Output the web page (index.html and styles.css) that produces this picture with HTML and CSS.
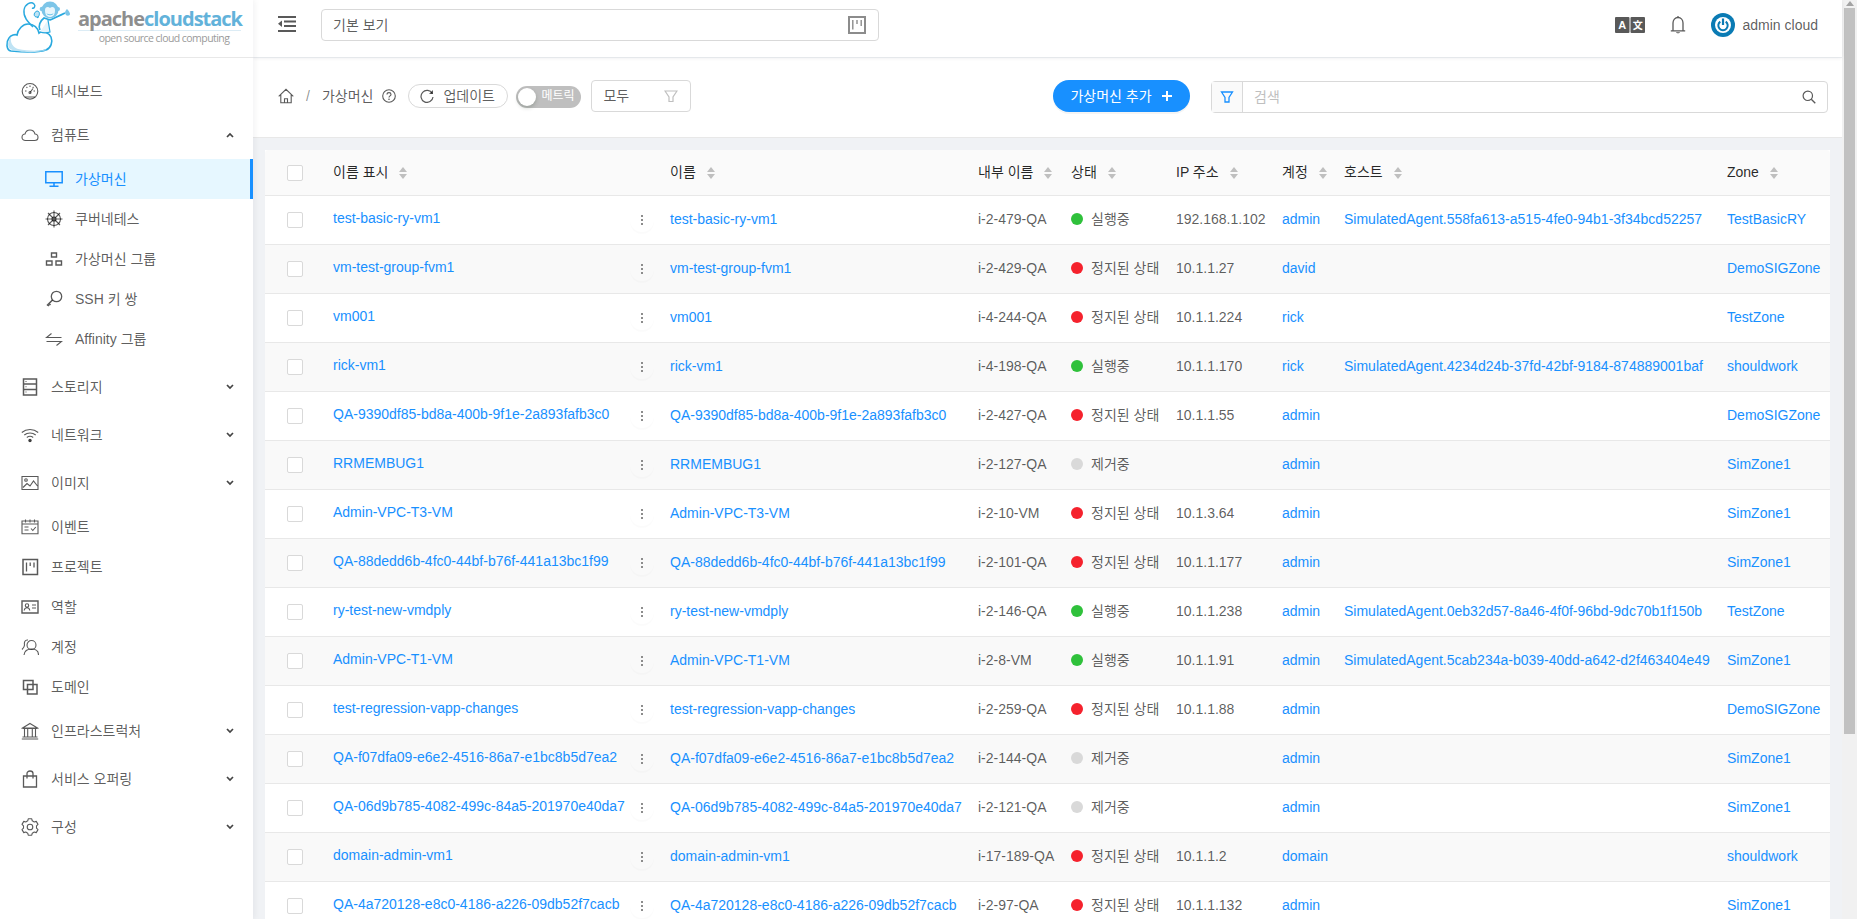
FILE: index.html
```html
<!DOCTYPE html>
<html lang="ko">
<head>
<meta charset="utf-8">
<title>가상머신 - Apache CloudStack</title>
<link rel="stylesheet" href="styles.css">
</head>
<body>
<svg class="defs" width="0" height="0" aria-hidden="true">
  <defs>
    <symbol id="sort" viewBox="0 0 8 12"><path d="M4 0l4 5H0z"/><path d="M4 12L0 7h8z"/></symbol>
    <symbol id="down" viewBox="0 0 8 6"><path d="M1 1l3 3 3-3" fill="none" stroke="currentColor" stroke-width="1.7"/></symbol>
    <symbol id="up" viewBox="0 0 8 6"><path d="M1 5l3-3 3 3" fill="none" stroke="currentColor" stroke-width="1.7"/></symbol>
    <symbol id="board" viewBox="0 0 18 18"><path d="M1 1h16v16H1z" fill="none" stroke="currentColor" stroke-width="2"/><path d="M4.800 4v9.500M9 4v4M13.200 4v6" fill="none" stroke="currentColor" stroke-width="1.400"/></symbol>
  </defs>
</svg>
<div class="app">
  <aside class="sidebar">
    <div class="logo">
      <svg class="logo-mark" viewBox="0 0 72 57">
        <path d="M11 51c-5-1-5-9-2-13 2-3 6-4 8-3 1-6 6-11 11-11 6 0 10 4 11 9 4-3 10 0 12 4 2 5 0 11-5 13-9 3-25 2-35 1z" fill="#fff" stroke="#29a9df" stroke-width="1.6"/>
        <path d="M10 49c-3-3-2-9 1-12-1 6 2 10 7 12 9 2 20 2 29 1-9 3-28 3-37-1z" fill="#bfe3f4"/>
        <path d="M33 27c-5-5-10-10-9-17 1-6 7-9 10-6 2 2 0 5-2 4" fill="none" stroke="#29a9df" stroke-width="1.4"/>
        <path d="M38 18c-1-3-1-5-1-5M40 30c-2-4 0-9 4-12l6 2c4-2 9-4 15-7" fill="none" stroke="#29a9df" stroke-width="1.6"/>
        <path d="M40 32c3 1 7 1 10 0l-2-12" fill="#e6f4fb" stroke="#29a9df" stroke-width="1.2"/>
        <circle cx="50" cy="10" r="8.500" fill="#7cc5e8"/>
        <circle cx="42" cy="9" r="2.300" fill="#7cc5e8"/>
        <circle cx="58" cy="9" r="2" fill="#7cc5e8"/>
        <path d="M45 10c0-3 3-4 5-2 2-2 5-1 5 2 0 5-2 7-5 7s-5-2-5-7z" fill="#e9f6fc"/>
        <path d="M46.500 13c2 2 5 2 7 0-1 3-6 3-7 0z" fill="#29a9df"/>
        <path d="M36 17c-3-1-2-5 1-6 3 0 3 4 1 6z" fill="#bfe3f4" stroke="#29a9df"/>
        <path d="M65 13c0-2 1-3 2-4 0 0 3 3 3 5s-4 3-5-1z" fill="#7cc5e8"/>
      </svg>
      <div class="logo-text">
        <div class="logo-name"><span class="logo-apache">apache</span><span class="logo-cloud">cloudstack</span></div>
        <div class="logo-tag">open source cloud computing</div>
      </div>
    </div>
    <nav class="menu">
      <a class="item gap-s">
        <svg class="ico" viewBox="0 0 18 18"><circle cx="9" cy="9.300" r="7.800"/><path d="M4 15h10M9 10.500l3-4M4 9h1.500M9 3.500v1.500M12.500 5l-.8.800M5.500 5l.8.800M14 9h-1.500"/><circle cx="9" cy="10.500" r="1"/></svg>
        <span>대시보드</span></a>
      <a class="item gap-s">
        <svg class="ico" viewBox="0 0 18 18"><path d="M4.500 14.500C2.500 14.500 1 13 1 11.200s1.500-3.200 3-3.200c.7-2.600 2.500-4 5-4s4.300 1.400 5 4c1.500 0 3 1.400 3 3.200s-1.500 3.300-3.500 3.300z"/></svg>
        <span>컴퓨트</span><svg class="chev"><use href="#up"/></svg></a>
      <a class="item nested active">
        <svg class="ico" viewBox="0 0 18 18"><path d="M.8 1.800h16.400v11H.8zM9 12.800v3.200M4.500 16.200h9" stroke-width="1.500"/></svg>
        <span>가상머신</span></a>
      <a class="item nested">
        <svg class="ico" viewBox="0 0 18 18"><circle cx="9" cy="9" r="6.500"/><circle cx="9" cy="9" r="2"/><path d="M9 .5v17M.5 9h17M3 3l12 12M15 3L3 15"/></svg>
        <span>쿠버네테스</span></a>
      <a class="item nested">
        <svg class="ico" viewBox="0 0 18 18"><path d="M6.500 3h5v4h-5zM1.500 11h5.500v4H1.500zM11 11h5.500v4H11z" stroke-width="1.400"/></svg>
        <span>가상머신 그룹</span></a>
      <a class="item nested">
        <svg class="ico" viewBox="0 0 18 18"><circle cx="11.500" cy="6.500" r="5.200" stroke-width="1.300"/><path d="M7.500 10L2 15.500M4 13.500l1.500 1.500M2.500 14.500L4 16" stroke-width="1.600"/></svg>
        <span>SSH 키 쌍</span></a>
      <a class="item nested gap-l">
        <svg class="ico" viewBox="0 0 18 18"><path d="M6.500 3.500l-5 4h15M11.500 15.500l5-4h-15"/></svg>
        <span>Affinity 그룹</span></a>
      <a class="item gap-l">
        <svg class="ico" viewBox="0 0 18 18"><path d="M2.500 1h13v16h-13zM2.500 6h13M2.500 11.500h13" stroke-width="1.500"/><path d="M4.500 3.500h1M4.500 8.700h1M4.500 14h1"/></svg>
        <span>스토리지</span><svg class="chev"><use href="#down"/></svg></a>
      <a class="item gap-l">
        <svg class="ico" viewBox="0 0 18 18"><path d="M.8 6.500c4.700-4 11.700-4 16.400 0M3.300 9c3.300-2.700 8.100-2.700 11.400 0M5.800 11.500c2-1.500 4.400-1.500 6.400 0"/><circle cx="9" cy="14.500" r="1.200" fill="currentColor"/></svg>
        <span>네트워크</span><svg class="chev"><use href="#down"/></svg></a>
      <a class="item gap-s">
        <svg class="ico" viewBox="0 0 18 18"><path d="M1 2.500h16v13H1zM2 13.500l4-4 3 2.500 3.500-5 4 5"/><circle cx="5" cy="6" r="1.300"/></svg>
        <span>이미지</span><svg class="chev"><use href="#down"/></svg></a>
      <a class="item">
        <svg class="ico" viewBox="0 0 18 18"><path d="M1 3h16v12.800H1zM4.500 1.500v3M9 1.500v3M13.500 1.500v3M1 6h16M3.500 9h4M3.500 12h4M10 10.500l1.800 2 3-3.500"/></svg>
        <span>이벤트</span></a>
      <a class="item">
        <svg class="ico" viewBox="0 0 18 18"><path d="M2 1.500h14.500v15H2z" stroke-width="1.500"/><path d="M5.500 4.500v9M9.200 4.500v3.500M13 4.500v5" stroke-width="1.300"/></svg>
        <span>프로젝트</span></a>
      <a class="item">
        <svg class="ico" viewBox="0 0 18 18"><path d="M1 3h16v12H1z" stroke-width="1.400"/><circle cx="6" cy="7.500" r="1.700"/><path d="M3.200 12.500c.3-2 1.500-2.800 2.800-2.800s2.500.8 2.800 2.800M11 7h4M11 10h4"/></svg>
        <span>역할</span></a>
      <a class="item">
        <svg class="ico" viewBox="0 0 18 18"><circle cx="10.500" cy="7" r="4.500"/><path d="M3 17c.5-4 3.500-6 7.500-6s7 2 7 6M7 2C4 1.500 3 4 3.500 7c0 1-1.500 3.500-2.500 4.500"/></svg>
        <span>계정</span></a>
      <a class="item gap-s">
        <svg class="ico" viewBox="0 0 18 18"><path d="M2.500 2.500h9.500v9H2.500zM6.500 6.500H16V16H6.500z" stroke-width="1.500"/></svg>
        <span>도메인</span></a>
      <a class="item gap-l">
        <svg class="ico" viewBox="0 0 18 18"><path d="M9 1.500l7.500 4.500h-15zM1.500 6.500h15M3.500 7v7.500M6.700 7v7.500M11.300 7v7.500M14.500 7v7.500M1.500 15h15M.8 17h16.400"/></svg>
        <span>인프라스트럭처</span><svg class="chev"><use href="#down"/></svg></a>
      <a class="item gap-l">
        <svg class="ico" viewBox="0 0 18 18"><path d="M2.500 6h13v11h-13zM6 8.500V3.500C6 2 7.300 1 9 1s3 1 3 2.500v5" stroke-width="1.300"/></svg>
        <span>서비스 오퍼링</span><svg class="chev"><use href="#down"/></svg></a>
      <a class="item">
        <svg class="ico" viewBox="0 0 18 18"><circle cx="9" cy="9" r="2.800"/><path stroke-linejoin="round" d="M6.740 2.800L7.250.78h3.500l.51 2.020 1.980 1.140 2-.56 1.750 3.020-1.490 1.450v2.300l1.490 1.450-1.750 3.020-2-.56-1.980 1.140-.51 2.020h-3.500l-.51-2.020-1.980-1.140-2 .56-1.750-3.020 1.490-1.450v-2.300L1.010 6.400l1.750-3.020 2 .56z"/></svg>
        <span>구성</span><svg class="chev"><use href="#down"/></svg></a>
    </nav>
  </aside>

  <div class="main">
    <header class="topbar">
      <svg class="collapse" viewBox="0 0 18 16"><path d="M0 1h18M6 5.500h12M6 10h12M0 15h18" fill="none" stroke="currentColor" stroke-width="1.800"/><path d="M0 7.700L4 4.500v6.500z" fill="currentColor"/></svg>
      <div class="project-select"><span>기본 보기</span><svg class="board"><use href="#board"/></svg></div>
      <div class="top-right">
        <svg class="translate" viewBox="0 0 30 16">
          <rect x="0" y="0" width="14.500" height="16" rx="1" fill="#595959"/>
          <rect x="15.500" y="0" width="14.500" height="16" rx="1" fill="#595959"/>
          <text x="7.200" y="12.300" class="translate-a">A</text>
          <text x="22.700" y="12" class="translate-z">文</text>
        </svg>
        <svg class="bell" viewBox="0 0 16 19"><path d="M3 14.500V7c0-3 2-5.500 5-5.500s5 2.500 5 5.500v7.500M.8 14.800h14.400" fill="none" stroke="currentColor" stroke-width="1.300"/><path d="M6 16.200c.3 1.500 3.700 1.500 4 0z" fill="currentColor"/><path d="M8 0v1.500" stroke="currentColor" stroke-width="1.200"/></svg>
        <div class="user">
          <svg class="avatar" viewBox="0 0 24 24"><circle cx="12" cy="12" r="12" fill="#0a7bb4"/><circle cx="12" cy="12" r="8" fill="#fff"/><path d="M9.300 8.600a4.700 4.700 0 1 0 5.400 0" fill="none" stroke="#0a7bb4" stroke-width="2"/><path d="M12 5.500v6.500" stroke="#0a7bb4" stroke-width="2.200"/></svg>
          <span>admin cloud</span>
        </div>
      </div>
    </header>

    <section class="toolbar">
      <svg class="home" viewBox="0 0 16 16"><path d="M.7 8.300L8 1.300l7.300 7M2.800 6.800v8h10.400v-8M6.500 14.800v-4h3v4" fill="none" stroke="currentColor" stroke-width="1.100"/></svg>
      <span class="crumb-sep">/</span>
      <span class="crumb">가상머신</span>
      <svg class="help" viewBox="0 0 14 14"><circle cx="7" cy="7" r="6.300" fill="none" stroke="currentColor" stroke-width="1.100"/><path d="M5 5.500c0-1.200 1-1.900 2-1.900s2 .7 2 1.800c0 1.400-2 1.500-2 3" fill="none" stroke="currentColor" stroke-width="1.100"/><circle cx="7" cy="10.200" r=".8" fill="currentColor"/></svg>
      <button class="refresh"><svg viewBox="0 0 14 14"><path d="M12.300 4.500A6 6 0 1 0 13 8" fill="none" stroke="currentColor" stroke-width="1.200"/><path d="M13 1v4H9z" fill="currentColor"/></svg><span>업데이트</span></button>
      <div class="toggle"><span class="knob"></span><span class="toggle-label">메트릭</span></div>
      <div class="filter-select"><span>모두</span><svg viewBox="0 0 14 14"><path d="M1 2h12L9 8v4.500H5V8z" fill="none" stroke="#bfbfbf" stroke-width="1.200"/></svg></div>
      <button class="add"><span>가상머신 추가</span><svg viewBox="0 0 12 12"><path d="M6 1v10M1 6h10" stroke="#fff" stroke-width="2"/></svg></button>
      <div class="search">
        <span class="search-filter"><svg viewBox="0 0 14 14"><path d="M1.500 2h11L9 7.500v4.500H5V7.500z" fill="none" stroke="#1890ff" stroke-width="1.300"/></svg></span>
        <span class="search-ph">검색</span>
        <svg class="search-ico" viewBox="0 0 14 14"><circle cx="5.800" cy="5.800" r="4.700" fill="none" stroke="currentColor" stroke-width="1.200"/><path d="M9.300 9.300l4 4" stroke="currentColor" stroke-width="1.300"/></svg>
      </div>
    </section>

    <main class="content">
      <table class="vm-table">
        <colgroup>
          <col class="c-check"><col class="c-display"><col class="c-name"><col class="c-internal"><col class="c-state"><col class="c-ip"><col class="c-account"><col class="c-host"><col class="c-zone">
        </colgroup>
        <thead>
          <tr>
            <th><span class="check"></span></th>
            <th>이름 표시<svg class="sort"><use href="#sort"/></svg></th>
            <th>이름<svg class="sort"><use href="#sort"/></svg></th>
            <th>내부 이름<svg class="sort"><use href="#sort"/></svg></th>
            <th>상태<svg class="sort"><use href="#sort"/></svg></th>
            <th>IP 주소<svg class="sort"><use href="#sort"/></svg></th>
            <th>계정<svg class="sort"><use href="#sort"/></svg></th>
            <th>호스트<svg class="sort"><use href="#sort"/></svg></th>
            <th>Zone<svg class="sort"><use href="#sort"/></svg></th>
          </tr>
        </thead>
        <tbody>
          <tr><td><span class="check"></span></td><td><div class="dn"><a>test-basic-ry-vm1</a><span class="more"></span></div></td><td><a>test-basic-ry-vm1</a></td><td>i-2-479-QA</td><td><span class="dot run"></span>실행중</td><td>192.168.1.102</td><td><a>admin</a></td><td><a>SimulatedAgent.558fa613-a515-4fe0-94b1-3f34bcd52257</a></td><td><a>TestBasicRY</a></td></tr>
          <tr><td><span class="check"></span></td><td><div class="dn"><a>vm-test-group-fvm1</a><span class="more"></span></div></td><td><a>vm-test-group-fvm1</a></td><td>i-2-429-QA</td><td><span class="dot stop"></span>정지된 상태</td><td>10.1.1.27</td><td><a>david</a></td><td></td><td><a>DemoSIGZone</a></td></tr>
          <tr><td><span class="check"></span></td><td><div class="dn"><a>vm001</a><span class="more"></span></div></td><td><a>vm001</a></td><td>i-4-244-QA</td><td><span class="dot stop"></span>정지된 상태</td><td>10.1.1.224</td><td><a>rick</a></td><td></td><td><a>TestZone</a></td></tr>
          <tr><td><span class="check"></span></td><td><div class="dn"><a>rick-vm1</a><span class="more"></span></div></td><td><a>rick-vm1</a></td><td>i-4-198-QA</td><td><span class="dot run"></span>실행중</td><td>10.1.1.170</td><td><a>rick</a></td><td><a>SimulatedAgent.4234d24b-37fd-42bf-9184-874889001baf</a></td><td><a>shouldwork</a></td></tr>
          <tr><td><span class="check"></span></td><td><div class="dn"><a>QA-9390df85-bd8a-400b-9f1e-2a893fafb3c0</a><span class="more"></span></div></td><td><a>QA-9390df85-bd8a-400b-9f1e-2a893fafb3c0</a></td><td>i-2-427-QA</td><td><span class="dot stop"></span>정지된 상태</td><td>10.1.1.55</td><td><a>admin</a></td><td></td><td><a>DemoSIGZone</a></td></tr>
          <tr><td><span class="check"></span></td><td><div class="dn"><a>RRMEMBUG1</a><span class="more"></span></div></td><td><a>RRMEMBUG1</a></td><td>i-2-127-QA</td><td><span class="dot gone"></span>제거중</td><td></td><td><a>admin</a></td><td></td><td><a>SimZone1</a></td></tr>
          <tr><td><span class="check"></span></td><td><div class="dn"><a>Admin-VPC-T3-VM</a><span class="more"></span></div></td><td><a>Admin-VPC-T3-VM</a></td><td>i-2-10-VM</td><td><span class="dot stop"></span>정지된 상태</td><td>10.1.3.64</td><td><a>admin</a></td><td></td><td><a>SimZone1</a></td></tr>
          <tr><td><span class="check"></span></td><td><div class="dn"><a>QA-88dedd6b-4fc0-44bf-b76f-441a13bc1f99</a><span class="more"></span></div></td><td><a>QA-88dedd6b-4fc0-44bf-b76f-441a13bc1f99</a></td><td>i-2-101-QA</td><td><span class="dot stop"></span>정지된 상태</td><td>10.1.1.177</td><td><a>admin</a></td><td></td><td><a>SimZone1</a></td></tr>
          <tr><td><span class="check"></span></td><td><div class="dn"><a>ry-test-new-vmdply</a><span class="more"></span></div></td><td><a>ry-test-new-vmdply</a></td><td>i-2-146-QA</td><td><span class="dot run"></span>실행중</td><td>10.1.1.238</td><td><a>admin</a></td><td><a>SimulatedAgent.0eb32d57-8a46-4f0f-96bd-9dc70b1f150b</a></td><td><a>TestZone</a></td></tr>
          <tr><td><span class="check"></span></td><td><div class="dn"><a>Admin-VPC-T1-VM</a><span class="more"></span></div></td><td><a>Admin-VPC-T1-VM</a></td><td>i-2-8-VM</td><td><span class="dot run"></span>실행중</td><td>10.1.1.91</td><td><a>admin</a></td><td><a>SimulatedAgent.5cab234a-b039-40dd-a642-d2f463404e49</a></td><td><a>SimZone1</a></td></tr>
          <tr><td><span class="check"></span></td><td><div class="dn"><a>test-regression-vapp-changes</a><span class="more"></span></div></td><td><a>test-regression-vapp-changes</a></td><td>i-2-259-QA</td><td><span class="dot stop"></span>정지된 상태</td><td>10.1.1.88</td><td><a>admin</a></td><td></td><td><a>DemoSIGZone</a></td></tr>
          <tr><td><span class="check"></span></td><td><div class="dn"><a>QA-f07dfa09-e6e2-4516-86a7-e1bc8b5d7ea2</a><span class="more"></span></div></td><td><a>QA-f07dfa09-e6e2-4516-86a7-e1bc8b5d7ea2</a></td><td>i-2-144-QA</td><td><span class="dot gone"></span>제거중</td><td></td><td><a>admin</a></td><td></td><td><a>SimZone1</a></td></tr>
          <tr><td><span class="check"></span></td><td><div class="dn"><a>QA-06d9b785-4082-499c-84a5-201970e40da7</a><span class="more"></span></div></td><td><a>QA-06d9b785-4082-499c-84a5-201970e40da7</a></td><td>i-2-121-QA</td><td><span class="dot gone"></span>제거중</td><td></td><td><a>admin</a></td><td></td><td><a>SimZone1</a></td></tr>
          <tr><td><span class="check"></span></td><td><div class="dn"><a>domain-admin-vm1</a><span class="more"></span></div></td><td><a>domain-admin-vm1</a></td><td>i-17-189-QA</td><td><span class="dot stop"></span>정지된 상태</td><td>10.1.1.2</td><td><a>domain</a></td><td></td><td><a>shouldwork</a></td></tr>
          <tr><td><span class="check"></span></td><td><div class="dn"><a>QA-4a720128-e8c0-4186-a226-09db52f7cacb</a><span class="more"></span></div></td><td><a>QA-4a720128-e8c0-4186-a226-09db52f7cacb</a></td><td>i-2-97-QA</td><td><span class="dot stop"></span>정지된 상태</td><td>10.1.1.132</td><td><a>admin</a></td><td></td><td><a>SimZone1</a></td></tr>
        </tbody>
      </table>
    </main>
  </div>

  <div class="scrollbar"><span class="arrow"></span><span class="thumb"></span></div>
</div>
</body>
</html>
```

FILE: styles.css
```css
* { box-sizing: border-box; }
html, body { margin: 0; height: 100%; overflow: hidden; }
body {
  font-family: "Liberation Sans", "Noto Sans CJK KR", sans-serif;
  font-size: 14px;
  line-height: 1.5;
  color: rgba(0, 0, 0, .65);
  background: #f0f2f5;
}
a { color: #1890ff; text-decoration: none; }
button { font: inherit; color: inherit; cursor: pointer; }
.defs { position: absolute; }

.app { display: flex; height: 100vh; overflow: hidden; }

/* sidebar */
.sidebar {
  flex: none;
  width: 253px;
  background: #fff;
  box-shadow: 2px 0 6px rgba(0, 21, 41, .05);
  position: relative;
  z-index: 2;
}
.logo {
  height: 58px;
  display: flex;
  border-bottom: 1px solid #e8e8e8;
  overflow: hidden;
}
.logo-mark { flex: none; width: 72px; height: 57px; }
.logo-text { margin-left: 6px; padding-top: 8px; width: 163px; }
.logo-name {
  font-family: "Open Sans", sans-serif;
  font-weight: 700;
  font-size: 20px;
  line-height: 22px;
  letter-spacing: -1px;
  white-space: nowrap;
  border-bottom: 1px solid #dcecf5;
  height: 23px;
}
.logo-apache { color: #8e8e8e; }
.logo-cloud { color: #62b2da; }
.logo-tag {
  font-family: "Open Sans", sans-serif;
  font-size: 10.5px;
  line-height: 14px;
  letter-spacing: -.55px;
  padding-left: 9px;
  color: #9a9a9a;
  text-align: center;
  white-space: nowrap;
}

.menu { display: flex; flex-direction: column; padding-top: 13px; }
.item {
  position: relative;
  display: flex;
  align-items: center;
  flex: none;
  height: 40px;
  padding-left: 21px;
  color: rgba(0, 0, 0, .65);
}
.item.gap-s { margin-bottom: 4px; }
.item.gap-l { margin-bottom: 8px; }
.item.nested { padding-left: 45px; }
.item.active { background: #e6f7ff; color: #1890ff; border-right: 3px solid #1890ff; }
.ico {
  flex: none;
  width: 18px;
  height: 18px;
  margin-right: 12px;
  fill: none;
  stroke: currentColor;
  stroke-width: 1.1;
}
.chev { position: absolute; left: 226px; top: 17px; width: 8px; height: 6px; color: #444; }

/* main column */
.main { flex: 1; min-width: 0; display: flex; flex-direction: column; }
.topbar {
  flex: none;
  height: 57px;
  background: #fff;
  box-shadow: 0 1px 4px rgba(0, 21, 41, .08);
  display: flex;
  align-items: center;
  padding-left: 25px;
  position: relative;
  z-index: 1;
}
.collapse { width: 18px; height: 16px; color: #595959; margin-right: 25px; margin-top: -9px; }
.project-select {
  width: 558px;
  height: 32px;
  margin-top: -7px;
  border: 1px solid #d9d9d9;
  border-radius: 4px;
  display: flex;
  align-items: center;
  justify-content: space-between;
  padding: 0 12px 0 11px;
}
.board { width: 18px; height: 18px; color: #8c8c8c; }
.top-right { margin-left: auto; display: flex; align-items: center; padding-right: 24px; margin-top: -7px; }
.translate { width: 30px; height: 16px; margin-right: 25px; }
.translate-a { font: 700 11px "Liberation Sans", sans-serif; fill: #fff; text-anchor: middle; }
.translate-z { font: 700 10px "Noto Sans CJK KR", sans-serif; fill: #fff; text-anchor: middle; }
.bell { width: 16px; height: 19px; color: #595959; margin-right: 25px; }
.user { display: flex; align-items: center; gap: 8px; }
.avatar { width: 24px; height: 24px; }

.toolbar {
  flex: none;
  height: 80px;
  margin-top: 1px;
  background: #fff;
  border-bottom: 1px solid #e8e8e8;
  display: flex;
  align-items: center;
  padding: 0 14px 3px 25px;
}
.home { width: 16px; height: 16px; color: #595959; }
.crumb-sep { margin: 0 12px 0 12px; color: rgba(0, 0, 0, .45); }
.crumb { margin-right: 9px; }
.help { width: 14px; height: 14px; color: #595959; margin-right: 12px; }
.refresh {
  display: flex;
  align-items: center;
  gap: 9px;
  width: 100px;
  height: 24px;
  padding: 0 0 0 11px;
  background: #fff;
  border: 1px solid #d9d9d9;
  border-radius: 12px;
}
.refresh svg { width: 14px; height: 14px; }
.toggle {
  position: relative;
  width: 65px;
  height: 22px;
  margin-left: 8px;
  margin-top: 2px;
  border-radius: 11px;
  background: #bfbfbf;
  color: #fff;
  font-size: 12px;
  line-height: 20px;
  padding-left: 25px;
}
.knob {
  position: absolute;
  left: 2px;
  top: 2px;
  width: 18px;
  height: 18px;
  border-radius: 50%;
  background: #fff;
  box-shadow: 0 2px 4px rgba(0, 35, 11, .2);
}
.filter-select {
  width: 100px;
  height: 32px;
  margin-left: 10px;
  border: 1px solid #d9d9d9;
  border-radius: 4px;
  display: flex;
  align-items: center;
  justify-content: space-between;
  padding: 0 12px 0 11px;
}
.filter-select svg { width: 14px; height: 14px; }
.add {
  margin-left: auto;
  width: 137px;
  height: 32px;
  border: 0;
  border-radius: 16px;
  background: #1890ff;
  color: #fff;
  box-shadow: 0 2px 0 rgba(0, 0, 0, .045);
  display: flex;
  align-items: center;
  justify-content: center;
  gap: 9px;
}
.add svg { width: 12px; height: 12px; }
.search {
  width: 617px;
  height: 32px;
  margin-left: 21px;
  margin-top: 2px;
  border: 1px solid #d9d9d9;
  border-radius: 4px;
  display: flex;
  align-items: center;
}
.search-filter {
  width: 31px;
  height: 30px;
  border-right: 1px solid #d9d9d9;
  background: #fafafa;
  display: flex;
  align-items: center;
  justify-content: center;
}
.search-filter svg { width: 14px; height: 14px; }
.search-ph { margin-left: 11px; color: #bfbfbf; }
.search-ico { width: 14px; height: 14px; margin-left: auto; margin-right: 11px; color: #595959; }

/* table */
.content { flex: 1; min-height: 0; overflow: hidden; padding: 12px 12px 0; }
.vm-table {
  width: 1565px;
  table-layout: fixed;
  border-collapse: separate;
  border-spacing: 0;
  background: #fff;
}
.c-check { width: 52px; }
.c-display { width: 337px; }
.c-name { width: 308px; }
.c-internal { width: 93px; }
.c-state { width: 105px; }
.c-ip { width: 106px; }
.c-account { width: 62px; }
.c-host { width: 383px; }
.c-zone { width: 119px; }
th, td {
  padding: 0 0 0 16px;
  border-bottom: 1px solid #e8e8e8;
  text-align: left;
  white-space: nowrap;
  font-weight: 400;
}
th:first-child, td:first-child { padding-left: 22px; }
th {
  height: 46px;
  background: #fafafa;
  color: rgba(0, 0, 0, .85);
}
thead th:first-child { border-top-left-radius: 4px; }
thead th:last-child { border-top-right-radius: 4px; }
td { height: 49px; padding-bottom: 2px; }
tbody tr:nth-child(even) td { background: #f9f9f9; }
.check {
  display: block;
  width: 16px;
  height: 16px;
  background: #fff;
  border: 1px solid #d9d9d9;
  border-radius: 2px;
}
tbody .check { margin-top: 2px; }
.sort { width: 8px; height: 12px; margin-left: 11px; vertical-align: -2px; fill: #bfbfbf; }
.dn { display: flex; align-items: center; justify-content: space-between; }
.dn a { padding-bottom: 2px; }
.more {
  position: relative;
  flex: none;
  width: 24px;
  height: 24px;
  margin-top: 2px;
  border-radius: 50%;
  box-shadow: 0 2px 0 rgba(0, 0, 0, .015);
}
.more::before {
  content: "";
  position: absolute;
  left: 11px;
  top: 7px;
  width: 2px;
  height: 2px;
  background: #8c8c8c;
  box-shadow: 0 4px 0 #8c8c8c, 0 8px 0 #8c8c8c;
}
.dot {
  display: inline-block;
  width: 12px;
  height: 12px;
  border-radius: 50%;
  margin-right: 8px;
  vertical-align: -1px;
}
.dot.run { background: #2fc13b; }
.dot.stop { background: #f5222d; }
.dot.gone { background: #d9d9d9; }

/* page scrollbar */
.scrollbar {
  flex: none;
  width: 15px;
  background: #f1f1f1;
  position: relative;
}
.arrow {
  position: absolute;
  left: 4px;
  top: 1px;
  border: 4px solid transparent;
  border-top: 0;
  border-bottom: 5px solid #a3a3a3;
}
.thumb {
  position: absolute;
  left: 2px;
  top: 8px;
  width: 11px;
  height: 726px;
  background: #c1c1c1;
}
```
